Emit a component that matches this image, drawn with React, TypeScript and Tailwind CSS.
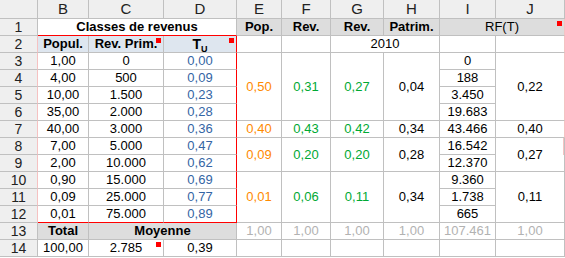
import React from 'react';

const GRID = 'border-r border-b border-r-[#c0c0c0] border-b-[#c0c0c0]';
const RED_R = 'border-r border-b border-r-[#ff0000] border-b-[#c0c0c0]';
const RED_B = 'border-r border-b border-r-[#c0c0c0] border-b-[#ff0000]';
const RED_RB = 'border-r border-b border-r-[#ff0000] border-b-[#ff0000]';
const PINK_R = 'border-r border-b border-r-[#f5c2c2] border-b-[#c0c0c0]';
const HEAD = 'bg-[#efefef] text-[15px] text-[#222]';
const ROWNUM = 'bg-[#efefef] text-[14px] text-[#222]';

const ORANGE = 'text-[#ff8a00]';
const GREEN = 'text-[#00a933]';
const BLUE = 'text-[#3465a4]';

function Cell({
  className = '',
  children,
  mark,
}: {
  className?: string;
  children?: React.ReactNode;
  mark?: boolean;
}) {
  return (
    <div className={`relative flex items-center justify-center overflow-hidden whitespace-nowrap ${className}`}>
      {children}
      {mark && <span className="absolute right-[2px] top-[2px] h-[5px] w-[5px] bg-[#ff0000]" />}
    </div>
  );
}

const left = [
  ['1,00', '0', '0,00'],
  ['4,00', '500', '0,09'],
  ['10,00', '1.500', '0,23'],
  ['35,00', '2.000', '0,28'],
  ['40,00', '3.000', '0,36'],
  ['7,00', '5.000', '0,47'],
  ['2,00', '10.000', '0,62'],
  ['0,90', '15.000', '0,69'],
  ['0,09', '25.000', '0,77'],
  ['0,01', '75.000', '0,89'],
];

const incomes = ['0', '188', '3.450', '19.683', '43.466', '16.542', '12.370', '9.360', '1.738', '665'];

const groups: Record<number, { span: string; vals: string[]; j: 'pink' | 'half' | 'gray' }> = {
  0: { span: 'row-span-4', vals: ['0,50', '0,31', '0,27', '0,04', '0,22'], j: 'pink' },
  4: { span: '', vals: ['0,40', '0,43', '0,42', '0,34', '0,40'], j: 'pink' },
  5: { span: 'row-span-2', vals: ['0,09', '0,20', '0,20', '0,28', '0,27'], j: 'half' },
  7: { span: 'row-span-3', vals: ['0,01', '0,06', '0,11', '0,34', '0,11'], j: 'gray' },
};

export default function App() {
  return (
    <div className="h-[258px] w-[565px] overflow-hidden bg-white font-['Liberation_Sans',Arial,sans-serif] text-[13px] text-black">
      <div className="grid grid-cols-[38px_51px_75px_73px_45px_49px_53px_56px_56px_69px] grid-rows-[19px_repeat(14,17px)]">
        {/* column headers */}
        <Cell className={`${HEAD} ${GRID}`} />
        {['B', 'C', 'D', 'E', 'F', 'G', 'H', 'I', 'J'].map((l) => (
          <Cell key={l} className={`${HEAD} ${GRID}`}>
            {l}
          </Cell>
        ))}

        {/* row 1 */}
        <Cell className={`${ROWNUM} ${GRID}`}>1</Cell>
        <Cell className={`col-span-3 font-bold ${RED_B}`}>Classes de revenus</Cell>
        <Cell className={`bg-[#dddddd] font-bold ${GRID}`}>Pop.</Cell>
        <Cell className={`bg-[#dddddd] font-bold ${GRID}`}>Rev.</Cell>
        <Cell className={`bg-[#dddddd] font-bold ${GRID}`}>Rev.</Cell>
        <Cell className={`bg-[#dddddd] font-bold ${GRID}`}>Patrim.</Cell>
        <Cell className={`col-span-2 bg-[#dddddd] ${PINK_R}`} mark>
          RF(T)
        </Cell>

        {/* row 2 */}
        <Cell className={`${ROWNUM} ${PINK_R}`}>2</Cell>
        <Cell className={`bg-[#dee6ef] font-bold ${GRID}`}>Popul.</Cell>
        <Cell className={`bg-[#dee6ef] font-bold ${GRID}`} mark>
          Rev. Prim.
        </Cell>
        <Cell className={`bg-[#dee6ef] font-bold ${RED_R}`} mark>
          <span className="text-[14px]">
            T<span className="relative top-[3px] text-[9px]">U</span>
          </span>
        </Cell>
        <Cell className={GRID} />
        <Cell className={GRID} />
        <Cell className={`col-span-2 ${GRID}`}>2010</Cell>
        <Cell className={GRID} />
        <Cell className={PINK_R} />

        {/* rows 3-12 */}
        {left.map((r, i) => {
          const last = i === left.length - 1;
          const g = groups[i];
          return (
            <React.Fragment key={i}>
              <Cell className={`${ROWNUM} ${PINK_R}`}>{i + 3}</Cell>
              <Cell className={last ? RED_B : GRID}>{r[0]}</Cell>
              <Cell className={last ? RED_B : GRID}>{r[1]}</Cell>
              <Cell className={`${BLUE} ${last ? RED_RB : RED_R}`}>{r[2]}</Cell>
              {g && (
                <>
                  <Cell className={`${g.span} ${ORANGE} ${GRID}`}>{g.vals[0]}</Cell>
                  <Cell className={`${g.span} ${GREEN} ${GRID}`}>{g.vals[1]}</Cell>
                  <Cell className={`${g.span} ${GREEN} ${GRID}`}>{g.vals[2]}</Cell>
                  <Cell className={`${g.span} ${GRID}`}>{g.vals[3]}</Cell>
                </>
              )}
              <Cell className={GRID}>{incomes[i]}</Cell>
              {g && (
                <Cell className={`${g.span} ${g.j === 'pink' ? PINK_R : GRID}`}>
                  {g.vals[4]}
                  {g.j === 'half' && <span className="absolute right-0 top-0 h-[17px] w-px bg-[#f5c2c2]" />}
                </Cell>
              )}
            </React.Fragment>
          );
        })}

        {/* row 13 */}
        <Cell className={`${ROWNUM} ${GRID}`}>13</Cell>
        <Cell className={`bg-[#dddddd] font-bold ${GRID}`}>Total</Cell>
        <Cell className={`col-span-2 bg-[#dddddd] font-bold ${GRID}`}>Moyenne</Cell>
        {['1,00', '1,00', '1,00', '1,00', '107.461', '1,00'].map((v, k) => (
          <Cell key={k} className={`text-[#b2b2b2] ${GRID}`}>
            {v}
          </Cell>
        ))}

        {/* row 14 */}
        <Cell className={`${ROWNUM} ${GRID}`}>14</Cell>
        <Cell className={GRID}>100,00</Cell>
        <Cell className={GRID} mark>
          2.785
        </Cell>
        <Cell className={GRID}>0,39</Cell>
        <Cell className={GRID} />
        <Cell className={GRID} />
        <Cell className={GRID} />
        <Cell className={GRID} />
        <Cell className={GRID} />
        <Cell className={GRID} />
      </div>
    </div>
  );
}
